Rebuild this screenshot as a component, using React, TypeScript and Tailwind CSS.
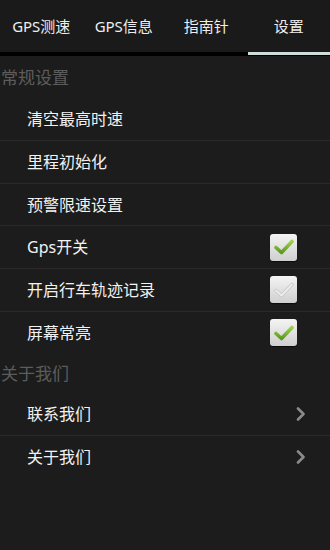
import React from "react";

const tabs = ["GPS测速", "GPS信息", "指南针", "设置"];

type Row = { label: string; kind: "plain" | "check" | "link"; checked?: boolean };

const general: Row[] = [
  { label: "清空最高时速", kind: "plain" },
  { label: "里程初始化", kind: "plain" },
  { label: "预警限速设置", kind: "plain" },
  { label: "Gps开关", kind: "check", checked: true },
  { label: "开启行车轨迹记录", kind: "check", checked: false },
  { label: "屏幕常亮", kind: "check", checked: true },
];

const about: Row[] = [
  { label: "联系我们", kind: "link" },
  { label: "关于我们", kind: "link" },
];

function CheckBox({ checked }: { checked: boolean }) {
  return (
    <div className="w-[27px] h-[27px] rounded-[3px] bg-gradient-to-b from-[#f4f4f4] to-[#cfcfcf] shadow-[0_1px_1px_rgba(0,0,0,0.6)] flex items-center justify-center">
      <svg width="20" height="16" viewBox="0 0 20 16">
        <defs>
          <linearGradient id="g" x1="0" y1="0" x2="0" y2="1">
            <stop offset="0" stopColor="#9bd24a" />
            <stop offset="1" stopColor="#5c9a1c" />
          </linearGradient>
        </defs>
        {checked ? (
          <path
            d="M2 8.5 L7.5 13.5 L18 2.5"
            fill="none"
            stroke="url(#g)"
            strokeWidth={3.6}
            strokeLinecap="round"
            strokeLinejoin="round"
          />
        ) : (
          <>
            <path d="M2 8.5 L7.5 13.5 L18 2.5" fill="none" stroke="#c4c4c4" strokeWidth={3.4} strokeLinecap="round" strokeLinejoin="round" />
            <path d="M2 8.5 L7.5 13.5 L18 2.5" fill="none" stroke="#ececec" strokeWidth={2} strokeLinecap="round" strokeLinejoin="round" />
          </>
        )}
      </svg>
    </div>
  );
}

function Chevron() {
  return (
    <svg width="10" height="14" viewBox="0 0 10 14">
      <path d="M2 1.5 L7.5 7 L2 12.5" fill="none" stroke="#8a8a8a" strokeWidth="2.6" strokeLinecap="round" strokeLinejoin="round" />
    </svg>
  );
}

function Section({ title, rows, headH }: { title: string; rows: Row[]; headH: string }) {
  return (
    <div>
      <div className={headH + " flex items-center pl-[1px] text-[17px] text-[#5c5c5c]"}>{title}</div>
      {rows.map((r, i) => (
        <div
          key={r.label}
          className={
            "h-[42.6px] flex items-center justify-between pl-[27px] " +
            (i < rows.length - 1 ? "border-b border-[#2a2a2a]" : "")
          }
        >
          <span className="text-[16px] text-[#f2f2f2]">{r.label}</span>
          {r.kind === "check" && (
            <div className="pr-[33px]">
              <CheckBox checked={!!r.checked} />
            </div>
          )}
          {r.kind === "link" && (
            <div className="pr-[24px]">
              <Chevron />
            </div>
          )}
        </div>
      ))}
    </div>
  );
}

export default function App() {
  return (
    <div
      className="w-[330px] h-[550px] overflow-hidden bg-[#1c1c1c] flex flex-col"
      style={{ fontFamily: '"Noto Sans", "Noto Sans CJK SC", sans-serif' }}
    >
      <div className="h-[52px] bg-[#1a1a1a] grid grid-cols-4">
        {tabs.map((t) => (
          <div key={t} className="flex items-center justify-center text-[15px] text-[#eeeeee]">
            {t}
          </div>
        ))}
      </div>
      <div className="h-[4px] bg-black flex justify-end">
        <div className="w-[82px] h-[3px] bg-[#cfdcdc]" />
      </div>
      <Section title="常规设置" rows={general} headH="h-[42.6px]" />
      <Section title="关于我们" rows={about} headH="h-[39.4px]" />
    </div>
  );
}
